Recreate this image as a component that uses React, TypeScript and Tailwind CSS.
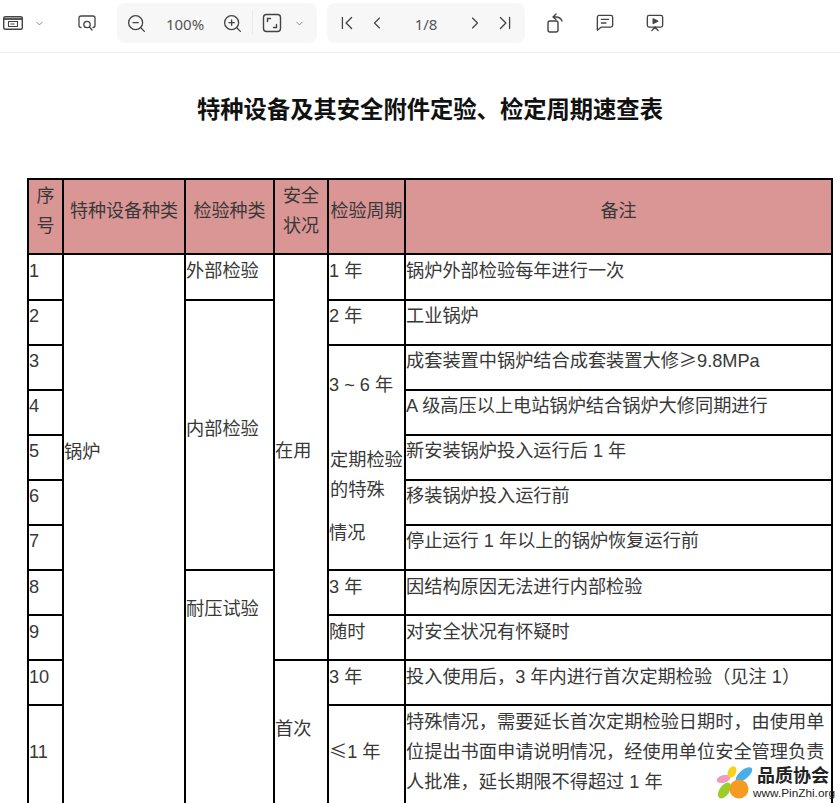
import { ChevronDown, ChevronFirst, ChevronLast, ChevronLeft, ChevronRight, ZoomIn, ZoomOut } from "lucide-react";

const notes = [
  "锅炉外部检验每年进行一次",
  "工业锅炉",
  "",
  "A 级高压以上电站锅炉结合锅炉大修同期进行",
  "新安装锅炉投入运行后 1 年",
  "移装锅炉投入运行前",
  "停止运行 1 年以上的锅炉恢复运行前",
  "因结构原因无法进行内部检验",
  "对安全状况有怀疑时",
  "投入使用后，3 年内进行首次定期检验（见注 1）",
];

const cell = "border-2 border-black p-0 align-top leading-8";
const tight = "border-2 border-black p-0 align-top leading-[30px]";
const head = "border-2 border-black p-0 pb-[12px] text-center align-middle leading-[30px] bg-[#d99694]";
const wide = "font-['Noto_Sans_CJK_SC'] leading-none [font-feature-settings:'fwid']";

function PanelIcon() {
  return (
    <svg width="20" height="14" viewBox="0 0 20 14" fill="none" stroke="#444" strokeWidth="1.4">
      <rect x="0.700" y="0.700" width="18.600" height="12.600" rx="1.500" />
      <path d="M1 3h18" strokeWidth="1.800" />
      <path d="M5.500 5.500h9v5h-9z M7.500 8h4" strokeWidth="1.100" />
    </svg>
  );
}

function SearchPageIcon() {
  return (
    <svg width="18" height="16" viewBox="0 0 18 16" fill="none" stroke="#444" strokeWidth="1.300" strokeLinecap="round">
      <path d="M3 12.500C1.800 12.500 1 11.700 1 10.500V3c0-1.200.8-2 2-2h12c1.200 0 2 .8 2 2v7.500c0 1.200-.8 2-2 2" />
      <circle cx="9" cy="9.500" r="3.200" />
      <path d="M11.400 11.900 14 15" />
    </svg>
  );
}

function FitIcon() {
  return (
    <svg width="20" height="20" viewBox="0 0 20 20" fill="none" stroke="#444" strokeWidth="1.400" strokeLinecap="round">
      <rect x="1.500" y="1.500" width="17" height="17" rx="3" />
      <path d="M5.500 8.500v-3h3 M14.500 11.500v3h-3" />
    </svg>
  );
}

function RotateIcon() {
  return (
    <svg width="20" height="22" viewBox="0 0 20 22" fill="none" stroke="#444" strokeWidth="1.400" strokeLinecap="round" strokeLinejoin="round">
      <rect x="3" y="9" width="10" height="11" rx="2" />
      <path d="M8 5h3c3 0 5 1.500 6 4 M11 2 8 5l3 2.500" />
    </svg>
  );
}

function CommentIcon() {
  return (
    <svg width="18" height="18" viewBox="0 0 20 20" fill="none" stroke="#444" strokeWidth="1.500" strokeLinecap="round" strokeLinejoin="round">
      <path d="M3.500 1.500h13a2 2 0 0 1 2 2v9a2 2 0 0 1-2 2H6l-4.500 3.500V3.500a2 2 0 0 1 2-2z" />
      <path d="M6 6h8 M6 10h5" />
    </svg>
  );
}

function PresentIcon() {
  return (
    <svg width="18" height="18" viewBox="0 0 20 20" fill="none" stroke="#444" strokeWidth="1.500" strokeLinecap="round" strokeLinejoin="round">
      <rect x="1.500" y="1.500" width="17" height="13" rx="2" />
      <path d="M8 5.500 13 8l-5 2.500z" fill="#444" />
      <path d="M10 14.500 6.500 18.500 M10 14.500l3.500 4" />
    </svg>
  );
}

function Logo() {
  return (
    <svg width="38" height="36" viewBox="0 0 38 36">
      <ellipse cx="7.500" cy="14" rx="7" ry="3.800" fill="#ee9ac4" transform="rotate(-15 7.500 14)" />
      <ellipse cx="16" cy="7" rx="4" ry="6" fill="#f6d21d" transform="rotate(25 16 7)" />
      <ellipse cx="28" cy="9.500" rx="4.500" ry="10" fill="#4aaee8" transform="rotate(50 28 9.500)" />
      <ellipse cx="8.500" cy="25.500" rx="5" ry="9" fill="#9ccb2a" transform="rotate(35 8.500 25.500)" />
      <circle cx="23" cy="24" r="9.500" fill="#f59a23" />
    </svg>
  );
}

export default function App() {
  return (
    <div lang="zh-CN" className="relative h-[803px] w-[840px] overflow-hidden bg-white font-['Liberation_Sans','Noto_Sans_CJK_SC',sans-serif] text-[#383838]">
      <div className="flex h-[53px] items-start border-b border-[#eeeeee] pt-[3px] text-[#555]">
        <div className="flex h-10 w-[26px] items-center justify-center"><PanelIcon /></div>
        <div className="flex h-10 w-[26px] items-center justify-center"><ChevronDown size={11} strokeWidth={1.5} /></div>
        <div className="ml-[10px] flex h-10 w-[50px] items-center justify-center"><SearchPageIcon /></div>
        <div className="ml-[5px] flex h-10 w-[200px] items-center rounded-lg bg-[#f7f7f8]">
          <div className="flex w-[38px] justify-center"><ZoomOut size={21} strokeWidth={1.5} color="#444" /></div>
          <div className="w-[60px] pt-[3px] text-center font-['Noto_Sans'] text-[15px]">100%</div>
          <div className="flex w-[34px] justify-center"><ZoomIn size={21} strokeWidth={1.5} color="#444" /></div>
          <div className="ml-[3px] h-6 w-px bg-[#eaeaea]" />
          <div className="flex w-[38px] justify-center"><FitIcon /></div>
          <div className="flex w-[16px] justify-center"><ChevronDown size={11} strokeWidth={1.5} /></div>
        </div>
        <div className="ml-[10px] flex h-10 w-[198px] items-center rounded-lg bg-[#f7f7f8]">
          <div className="flex w-[40px] justify-center"><ChevronFirst size={22} strokeWidth={1.4} color="#444" /></div>
          <div className="flex w-[20px] justify-center"><ChevronLeft size={22} strokeWidth={1.4} color="#444" /></div>
          <div className="w-[78px] pt-[3px] text-center font-['Noto_Sans'] text-[15px]">1/8</div>
          <div className="flex w-[20px] justify-center"><ChevronRight size={22} strokeWidth={1.4} color="#444" /></div>
          <div className="flex w-[40px] justify-center"><ChevronLast size={22} strokeWidth={1.4} color="#444" /></div>
        </div>
        <div className="ml-[5px] flex h-10 w-[50px] items-center justify-center"><RotateIcon /></div>
        <div className="flex h-10 w-[50px] items-center justify-center"><CommentIcon /></div>
        <div className="flex h-10 w-[50px] items-center justify-center"><PresentIcon /></div>
      </div>

      <div className="ml-[27px] w-[806px]">
        <h1 className="pt-[40px] pb-[51px] text-center text-[23.3px] leading-[34px] font-bold text-[#111]">
          特种设备及其安全附件定验、检定周期速查表
        </h1>
        <table className="w-[806px] table-fixed border-collapse text-[18.2px]">
          <colgroup>
            <col className="w-[35px]" />
            <col className="w-[122px]" />
            <col className="w-[89px]" />
            <col className="w-[54px]" />
            <col className="w-[77px]" />
            <col />
          </colgroup>
          <tbody>
            <tr className="h-[75px] text-[18px]">
              <td className={head}>序<br />号</td>
              <td className={head}>特种设备种类</td>
              <td className={head}>检验种类</td>
              <td className={head}>安全<br />状况</td>
              <td className={head}>检验周期</td>
              <td className={head}>备注</td>
            </tr>
            <tr className="h-[46px]">
              <td className={cell}>1</td>
              <td rowSpan={11} className={`${cell} pt-[181px]`}>锅炉</td>
              <td className={cell}>外部检验</td>
              <td rowSpan={9} className={`${cell} pt-[180px]`}>在用</td>
              <td className={cell}>1 年</td>
              <td className={cell}>{notes[0]}</td>
            </tr>
            <tr className="h-[45px]">
              <td className={tight}>2</td>
              <td rowSpan={6} className={`${cell} pt-[112px]`}>内部检验</td>
              <td className={tight}>2 年</td>
              <td className={tight}>{notes[1]}</td>
            </tr>
            <tr className="h-[45px]">
              <td className={tight}>3</td>
              <td rowSpan={5} className={`${cell} pt-[23px]`}>
                <div>3 ~ 6 年</div>
                <div className="mt-[44px] pl-px leading-[30px]">定期检验<br />的特殊</div>
                <div className="mt-[13px] leading-[30px]">情况</div>
              </td>
              <td className={tight}>
                成套装置中锅炉结合成套装置大修<span className={wide}>≥</span>9.8MPa
              </td>
            </tr>
            {[3, 4, 5, 6].map((i) => (
              <tr key={i} className="h-[45px]">
                <td className={tight}>{i + 1}</td>
                <td className={tight}>{notes[i]}</td>
              </tr>
            ))}
            <tr className="h-[45px]">
              <td className={cell}>8</td>
              <td rowSpan={4} className={`${cell} pt-[22px]`}>耐压试验</td>
              <td className={cell}>3 年</td>
              <td className={cell}>{notes[7]}</td>
            </tr>
            <tr className="h-[45px]">
              <td className={cell}>9</td>
              <td className={cell}>随时</td>
              <td className={cell}>{notes[8]}</td>
            </tr>
            <tr className="h-[45px]">
              <td className={cell}>10</td>
              <td rowSpan={2} className={`${cell} pt-[52px]`}>首次</td>
              <td className={cell}>3 年</td>
              <td className={cell}>{notes[9]}</td>
            </tr>
            <tr className="h-[107px]">
              <td className={`${cell} pt-[30px]`}>11</td>
              <td className={`${cell} pt-[30px]`}><span className={wide}>≤</span>1 年</td>
              <td className="border-2 border-black p-0 pt-px align-top leading-[30px]">
                特殊情况，需要延长首次定期检验日期时，由使用单<br />
                位提出书面申请说明情况，经使用单位安全管理负责<br />
                人批准，延长期限不得超过 1 年
              </td>
            </tr>
          </tbody>
        </table>
      </div>

      <div className="absolute top-[765px] left-[716px] flex">
        <Logo />
        <div className="-ml-[1px] flex flex-col">
          <span className="pl-[4px] text-[18px] leading-[22px] font-bold text-[#222]">品质协会</span>
          <span className="font-['Liberation_Sans'] text-[11.8px] leading-[12px] text-[#222]">www.PinZhi.org</span>
        </div>
      </div>
    </div>
  );
}
